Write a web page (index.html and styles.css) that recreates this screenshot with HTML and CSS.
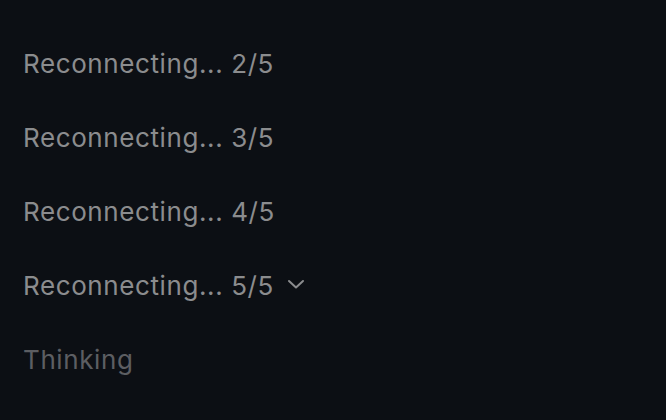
FILE: index.html
```html
<!DOCTYPE html>
<html lang="en">
<head>
    <meta charset="UTF-8">
    <title>Status</title>
<link rel="stylesheet" href="styles.css">
</head>
<body>
    <div class="status-list">
        <div class="status-row">Reconnecting... 2/5</div>
        <div class="status-row">Reconnecting... 3/5</div>
        <div class="status-row">Reconnecting... 4/5</div>
        <div class="status-row">
            Reconnecting... 5/5
            <svg class="chevron" width="18" height="10" viewBox="0 0 18 10">
                <path d="M2 2 L9 8.5 L16 2" fill="none" stroke="currentColor" stroke-width="2" stroke-linecap="round" stroke-linejoin="round"/>
            </svg>
        </div>
        <div class="status-row thinking">Thinking</div>
    </div>
</body>
</html>
```

FILE: styles.css
```css
body {
    margin: 0;
    background: #0c0f14;
    font-family: 'Inter', 'Noto Sans', sans-serif;
    width: 666px;
    height: 420px;
    overflow: hidden;
}

.status-list {
    display: flex;
    flex-direction: column;
    padding: 26px 23px 0;
}

.status-row {
    display: flex;
    align-items: center;
    gap: 13px;
    height: 74px;
    font-size: 26px;
    letter-spacing: 0.6px;
    color: #8b8c8e;
}

.chevron {
    color: #8b8c8e;
    margin-bottom: 2px;
}

.thinking {
    color: #5c5e62;
}
```
